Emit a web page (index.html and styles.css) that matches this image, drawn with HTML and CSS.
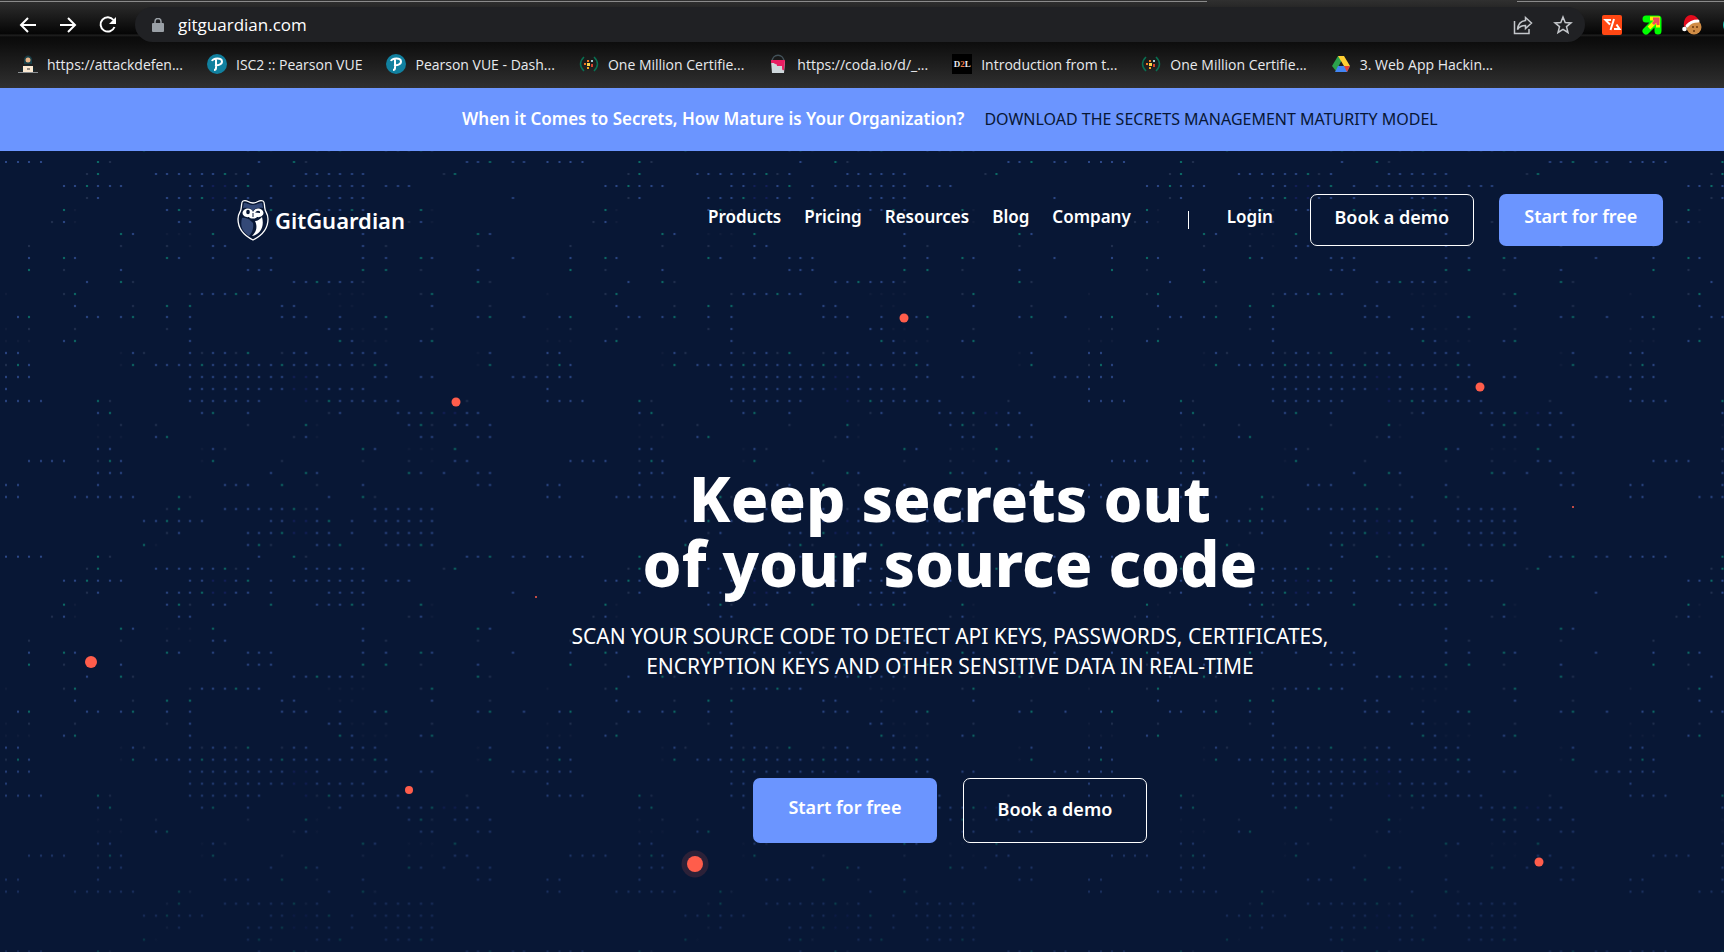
FILE: index.html
```html
<!DOCTYPE html>
<html lang="en">
<head>
<meta charset="utf-8">
<title>GitGuardian</title>
<link rel="stylesheet" href="styles.css">
</head>
<body>
<header class="browser">
  <div class="tab-edge"><span class="edge edge-left"></span><span class="edge edge-right"></span></div>
  <div class="toolbar">
    <div class="nav-buttons">
      <button type="button" class="icon-button" aria-label="Back"><svg width="20" height="20" viewBox="0 0 20 20"><path d="M18 10H3M10 3L3 10l7 7"/></svg></button>
      <button type="button" class="icon-button" aria-label="Forward"><svg width="20" height="20" viewBox="0 0 20 20"><path d="M2 10h15M10 3l7 7-7 7"/></svg></button>
      <button type="button" class="icon-button" aria-label="Reload"><svg width="20" height="20" viewBox="0 0 20 20"><path d="M15.500 5A7.200 7.200 0 1 0 16.500 12"/><path d="M18 2v7h-7z" fill="#fff" stroke="none"/></svg></button>
    </div>
    <form class="address">
      <svg class="lock" width="12" height="14" viewBox="0 0 12 14"><rect x="0" y="5" width="12" height="9" rx="1" fill="#9aa0a6"/><path d="M3 6V3.500a3 3 0 0 1 6 0V6" fill="none" stroke="#9aa0a6" stroke-width="1.500"/></svg>
      <input class="url" type="text" aria-label="Address" value="gitguardian.com">
      <button type="button" class="icon-button muted" aria-label="Share"><svg width="20" height="20" viewBox="0 0 20 20"><path d="M1.500 6v12.500h14.500V14"/><path d="M12.500 2.500l6 5.500-6 5.500V10.500C8.500 10.500 6 12 4.500 14.500 5 9.500 8 6 12.500 5.500z"/></svg></button>
      <button type="button" class="icon-button muted" aria-label="Bookmark"><svg width="20" height="20" viewBox="0 0 20 20"><path d="M10 2l2.200 5.500 5.800.4-4.500 3.700 1.500 5.900-5-3.200-5 3.200 1.500-5.900L2 7.900l5.800-.4z"/></svg></button>
    </form>
    <div class="extensions">
      <button type="button" class="icon-button" aria-label="Code extension"><svg width="20" height="20" viewBox="0 0 20 20"><rect width="20" height="20" rx="2" fill="#ff4713" stroke="none"/><path d="M9 5H3.500L8 9.500M12 4L8.500 15M14.500 9.500L17.500 14H12"/></svg></button>
      <button type="button" class="icon-button" aria-label="Arrow extension"><svg width="20" height="20" viewBox="0 0 20 20"><path d="M4 4h12v12M15 5L4 16" stroke="#0f0" stroke-width="7" stroke-linejoin="round" stroke-linecap="round"/><path d="M8 3.500h8v9M15 5L7 13" stroke="#fff200" stroke-width="4"/><path d="M11 4h5v6M15 5L11 9" stroke="#f0485d" stroke-width="3"/></svg></button>
      <button type="button" class="icon-button" aria-label="Cookie extension"><svg width="20" height="20" viewBox="0 0 20 20"><circle cx="12" cy="12" r="7.500" fill="#d08c45" stroke="none"/><circle cx="11" cy="12" r="1" fill="#68370f" stroke="none"/><circle cx="15" cy="12" r="1" fill="#68370f" stroke="none"/><circle cx="12" cy="16" r="1" fill="#68370f" stroke="none"/><path d="M2 12C1 4 5 0 9 0c4 0 7 3 8 6-5 0-8 2-11 5z" fill="#e30b1c" stroke="none"/><path d="M5 11c3-4 7-5 11-5" stroke="#fff" stroke-width="3" stroke-linecap="round"/><circle cx="2.500" cy="14" r="2.300" fill="#fff" stroke="none"/></svg></button>
      <button type="button" class="icon-button" aria-label="More extensions"><svg width="20" height="20" viewBox="0 0 20 20"><circle cx="10" cy="10" r="9" fill="#19b5a5" stroke="none"/></svg></button>
    </div>
  </div>
  <nav class="bookmarks" aria-label="Bookmarks">
    <a class="bookmark" href="#"><svg width="20" height="20" viewBox="0 0 20 20"><path d="M6 6c0-6 8-6 8 0v4H6z" fill="#183f48"/><circle cx="10" cy="6" r="2.500" fill="#e7b489"/><path d="M3 17c0-8 14-8 14 0z" fill="#152b31"/><rect x="5" y="12" width="10" height="6" fill="#fbe9d2"/><path d="M0 18h20v1H0z" fill="#8a8f92"/><path d="M9 15h3" stroke="#333"/></svg><span>https://attackdefen...</span></a>
    <a class="bookmark" href="#"><svg width="20" height="20" viewBox="0 0 20 20"><circle cx="10" cy="10" r="10" fill="#11809f"/><path d="M5 7c1-3 10-4 10 .5 0 3-4 4-7 3.500M9 5v9c0 2-1 2-2 2" fill="none" stroke="#fff" stroke-width="2"/></svg><span>ISC2 :: Pearson VUE</span></a>
    <a class="bookmark" href="#"><svg width="20" height="20" viewBox="0 0 20 20"><circle cx="10" cy="10" r="10" fill="#11809f"/><path d="M5 7c1-3 10-4 10 .5 0 3-4 4-7 3.500M9 5v9c0 2-1 2-2 2" fill="none" stroke="#fff" stroke-width="2"/></svg><span>Pearson VUE - Dash...</span></a>
    <a class="bookmark" href="#"><svg width="20" height="20" viewBox="0 0 20 20"><path d="M5 3Q-2 10 5 17M15 3Q22 10 15 17" fill="none" stroke="#087052" stroke-width="1.500"/><path d="M8 6h2v2H8zM5 9h2v2H5z" fill="#ef7b22"/><path d="M12 6h2v2h-2z" fill="#a8ced5"/><path d="M8 9h3v3H8z" fill="#f8d54c"/><path d="M8 13h2v2H8z" fill="#f3a51f"/><path d="M12 10h2v3h-2z" fill="#d6452b"/></svg><span>One Million Certifie...</span></a>
    <a class="bookmark" href="#"><svg width="20" height="20" viewBox="0 0 20 20"><path d="M4 8C4-1 16-1 16 8" fill="none" stroke="#43525a" stroke-width="1.500"/><path d="M3 7h14l-1 12H4z" fill="#cfd8dc"/><path d="M3 6h14l-1 10c-2 1-2-1-2-4H9c0-3-2-1-3-3H3z" fill="#e91e63"/></svg><span>https://coda.io/d/_...</span></a>
    <a class="bookmark" href="#"><span class="d2l">D<i>2</i>L</span><span>Introduction from t...</span></a>
    <a class="bookmark" href="#"><svg width="20" height="20" viewBox="0 0 20 20"><path d="M5 3Q-2 10 5 17M15 3Q22 10 15 17" fill="none" stroke="#087052" stroke-width="1.500"/><path d="M8 6h2v2H8zM5 9h2v2H5z" fill="#ef7b22"/><path d="M12 6h2v2h-2z" fill="#a8ced5"/><path d="M8 9h3v3H8z" fill="#f8d54c"/><path d="M8 13h2v2H8z" fill="#f3a51f"/><path d="M12 10h2v3h-2z" fill="#d6452b"/></svg><span>One Million Certifie...</span></a>
    <a class="bookmark" href="#"><svg width="20" height="20" viewBox="0 0 20 20"><path d="M7 2h6L5 17l-4-5z" fill="#2ba24c"/><path d="M7 2h6l6 10h-6z" fill="#ffcf32"/><path d="M7 12h12l-3 6H4z" fill="#4285f4"/><path d="M13 12h6l-3 6z" fill="#e34234"/></svg><span>3. Web App Hackin...</span></a>
  </nav>
</header>
<div class="viewport">
<div class="site">
  <aside class="banner">
    <strong>When it Comes to Secrets, How Mature is Your Organization?</strong>
    <a href="#">DOWNLOAD THE SECRETS MANAGEMENT MATURITY MODEL</a>
  </aside>
  <main class="hero">
    <svg class="backdrop" aria-hidden="true">
      <defs>
        <pattern id="grid" x="5" y="10" width="541.500" height="394.700" patternUnits="userSpaceOnUse"></pattern>
        <linearGradient id="fade" x1="0" y1="0" x2="0" y2="1"><stop offset="0.700" stop-color="#081735" stop-opacity="0"/><stop offset="1" stop-color="#081735" stop-opacity="0.600"/></linearGradient>
      </defs>
      <rect width="100%" height="100%" fill="url(#grid)"/>
      <rect width="100%" height="100%" fill="url(#fade)"/>
      <g fill="#ff5d4b">
        <circle cx="904" cy="167" r="4.500"/><circle cx="456" cy="251" r="4.500"/><circle cx="1480" cy="236" r="4.500"/>
        <circle cx="91" cy="511" r="6"/><circle cx="409" cy="639" r="4"/><circle cx="1539" cy="711" r="4.500"/>
        <circle cx="1573" cy="356" r="1"/><circle cx="536" cy="446" r="1"/>
        <circle cx="695" cy="713" r="13.500" opacity="0.150"/><circle cx="695" cy="713" r="8"/>
      </g>
    </svg>
    <nav class="menu" aria-label="Main">
      <a class="brand" href="#">
        <svg width="32" height="42" viewBox="0 0 32 42"><path d="M6 2C10 0 11 4 16 4s6-4 10-2c2 1 1 4 2 8 0 3 3 4 3 10 0 11-7 17-15 21C8 37 1 31 1 20c0-6 3-7 3-10C5 6 4 3 6 2z" fill="#081735" stroke="#fff" stroke-width="1.300"/><path d="M7 4c4 0 5 2 9 2s5-2 9-2l1 5c-5-1-8 0-10 3-2-3-5-4-10-3z" fill="#344977"/><path d="M7 11c4-3 8-1 9 2 1-3 5-5 9-2 4 4-1 8-5 7-1 2-7 2-8 0-4 1-9-3-5-7z" fill="#fff"/><ellipse cx="11" cy="13" rx="1.800" ry="2.300" fill="#081735"/><path d="M18 13.500q2.500-3 5-1v1.500z" fill="#081735"/><path d="M16 14v4" stroke="#081735"/><path d="M5 19c4-1 8 2 11 5 1 5-1 10-4 13C5 32 3 27 5 19z" fill="#344977"/><path d="M18 22c3 0 5-2 7-4 3 11-3 18-10 19 4-4 6-9 3-15z" fill="#fff"/></svg>
        <span>GitGuardian</span>
      </a>
      <div class="links"><a href="#">Products</a><a href="#">Pricing</a><a href="#">Resources</a><a href="#">Blog</a><a href="#">Company</a></div>
      <span class="divider"></span>
      <a class="login" href="#">Login</a>
      <button type="button" class="button outline">Book a demo</button>
      <button type="button" class="button solid">Start for free</button>
    </nav>
    <section class="pitch">
      <h1>Keep secrets out<br>of your source code</h1>
      <p>SCAN YOUR SOURCE CODE TO DETECT API KEYS, PASSWORDS, CERTIFICATES,<br>ENCRYPTION KEYS AND OTHER SENSITIVE DATA IN REAL-TIME</p>
      <div class="actions">
        <button type="button" class="button large solid">Start for free</button>
        <button type="button" class="button large outline">Book a demo</button>
      </div>
    </section>
  </main>
</div>
</div>
<script src="dots.js"></script>
</body>
</html>
```
FILE: styles.css
```css
* { box-sizing: border-box; }
body {
  margin: 0;
  height: 100vh;
  overflow: hidden;
  display: flex;
  flex-direction: column;
  background: #081735;
  color: #fff;
  font-family: "Noto Sans", "Open Sans", sans-serif;
}
a { color: inherit; text-decoration: none; }
button { font: inherit; color: inherit; border: 0; padding: 0; background: none; }
svg { flex: none; display: block; }

.browser { flex: none; height: 88px; background: linear-gradient(#303030 0, #050505 34px, #222 35px, #0b0b0b 37px, #0d0d0d 42px, #303030 88px); font-family: "Open Sans", sans-serif; overflow: hidden; }
.tab-edge { display: flex; justify-content: space-between; padding-top: 1px; height: 2px; }
.edge { height: 1px; background: #8a8a8a; }
.edge-left { width: 70%; }
.edge-right { width: 12%; }
.toolbar { display: flex; align-items: center; height: 45px; padding-left: 18px; }
.nav-buttons { display: flex; gap: 20px; width: 117px; }
.icon-button { flex: none; width: 20px; height: 20px; }
.icon-button svg { fill: none; stroke: #fff; stroke-width: 2; }
.muted svg { stroke: #c4c7cb; stroke-width: 1.5; }
.address { flex: 1; display: flex; align-items: center; gap: 20px; height: 35px; padding: 0 12px 0 17px; border-radius: 18px; background: #202124; }
.lock { margin-right: -6px; }
.url { flex: 1; min-width: 0; padding: 0; border: 0; outline: 0; background: none; color: #fff; font: 17px "Open Sans", sans-serif; }
.extensions { display: flex; gap: 20px; width: 139px; padding-left: 17px; }
.bookmarks { display: flex; gap: 24px; height: 36px; padding: 0 0 2px 18px; align-items: center; font-size: 14px; color: #e8eaed; }
.bookmark { display: flex; align-items: center; gap: 9px; white-space: nowrap; }
.d2l { width: 20px; height: 20px; background: #000; font: bold 9px/20px "Liberation Serif", serif; text-align: center; }
.d2l i { font-style: normal; color: #ef7b42; }

.viewport { flex: 1; min-height: 0; overflow: hidden; }
.site { width: 110.2vw; height: 100%; display: flex; flex-direction: column; }
.banner { flex: none; display: flex; justify-content: center; align-items: center; gap: 20px; height: 63px; padding-bottom: 2px; background: #6b95ff; font-size: 16px; }
.banner strong { font-size: 17px; font-weight: 600; }
.banner a { color: #081735; }
.hero { flex: 1; position: relative; min-height: 0; }
.backdrop { position: absolute; inset: 0; width: 100%; height: 100%; }
.menu { position: relative; display: flex; align-items: center; padding: 43px 237px 0 237px; font-size: 17px; font-weight: 600; }
.brand { display: flex; align-items: center; gap: 6px; margin-right: auto; font-size: 22px; }
.links { display: flex; gap: 23px; padding-bottom: 8px; }
.divider { width: 1px; height: 18px; margin: 0 38px 0 57px; background: #fff; }
.login { margin-right: 37px; padding-bottom: 8px; }
.button { height: 52px; width: 164px; border-radius: 7px; padding-bottom: 6px; font-size: 18px; font-weight: 600; }
.outline { border: 1px solid #fff; }
.solid { background: #6b95ff; padding-bottom: 8px; }
.menu .outline { margin-right: 25px; }
.pitch { position: relative; text-align: center; padding-top: 220px; }
h1 { margin: 0; font-size: 62px; line-height: 65px; font-weight: 800; }
.pitch p { margin: 25px 0 0; font-size: 21px; line-height: 30px; }
.actions { display: flex; justify-content: center; gap: 26px; margin-top: 97px; }
.large { width: 184px; height: 65px; }
.large.outline { padding-bottom: 3px; }
```
FILE: dots.js
```js
const rows = [
  "b0-3 g8 d9 b22 g25 d26 b40-41 g42 b44 b45",
  "d7 g8 b13-18 g19 d20 b21 b26-31 d38 g39",
  "b5-6 g7 b8-10 b16-17 n18-19 b20 g21 b23 b25-31 b33-35",
  "d7 b8 b14-16 g17 n18-19 b20-21 b23 b28-31 b44",
  "g5 f6 b14 g15 d16 b18-19 g23 b27-29 g30 b31 g36 f37",
  "d4 b5 f6 b15-16 d35 b36 f37",
  "g10 b11 f14-16 g18 b31 g41 b42",
  "d2 d10 d14 f16 b18-19 b31 d33 d41",
  "b2 g5 b6 g14 b15 b18 b21-23 b31 b33 g36 b37 b44",
  "g2 d5 b10 b21-23 g31 g33 d36 b41",
  "b7 g10 d11 b25-26 g27 b28-30 d31 g41 d42",
  "f0 d5 g6 d16 b17-19 g20 b21-22 f28-31 d36 g37",
  "b6 d11 g14 g16 b24-25 f29-30 b37 d42",
  "b1 g2 b7-8 b10 g11 b14 b16 b24-26 b29 b32 g33 b41 g42 b45",
  "f0 d2 d6 d14 b16 b28-29 f30-31 d33 d37",
  "f0-2 b5 g6 b16 g29 b30 f31-33 b36 g37",
  "b0-1 f10 b11 d12 b16 d17 b18-19 d20 g21 d24 b25-26 b30-32 f41 b42",
  "d0 g1 b2 f10 g11 b13-16 g17 b18-23 g24 b25-30 d31 g32 b33 f41 g42",
  "b0-2 b16-24 n25-26 b27 b32-33 b36-37 b44-46",
  "b0 b16-24 n25-26 b27-31",
  "b0-3 g8 d9 b16-22 n26 d27 g28 b29-34 d40",
  "b8 g9 b17 g18 b21 d28 b29 b34-36 g37 n38-39 b40-41",
  "f8 d10 d13 d21 g26 f27 b35 g36 d37 b39-40 b42",
  "f8-10 b13 g14 d25 b26 f27 b36-37 b41-42",
  "b8-9 f17 b18 d19 g31 b32 f35-37 g39",
  "b2-5 d8 g9 b10 f17 g18 d24 d31 d35 f37 b39-40",
  "b8-10 b23 g26 b27 g35 b36 b38 b41-42",
  "b0-1 b8 b19-21 g24 d27 b31 b41-42",
  "b0-1 b6-11 g15 d16 b28 g31 d32",
  "d14 g15 b19-24 g25 d26 b27 b32-37",
  "b12-13 g14 b15-17 b23-24 n25-26 b27 g28 b30 b32-37",
  "d14 b15 b21-23 g24 n25-26 b27-28 b30 b33-37",
  "g12 f13 b21 g22 d23 b27-28 g29 b33-35 g36 b37"
];
const colors = { b: "#2c4888", g: "#0b6f68", d: "#21304f", n: "#131f5b", f: "#111e3c" };
const pattern = document.getElementById("grid");
rows.forEach((row, r) => {
  row.split(" ").forEach((run) => {
    const [from, to = from] = run.slice(1).split("-").map(Number);
    for (let c = from; c <= to; c++) {
      const dot = document.createElementNS("http://www.w3.org/2000/svg", "rect");
      dot.setAttribute("x", Math.round(c * 11.52));
      dot.setAttribute("y", Math.round(r * 11.96));
      dot.setAttribute("width", 2);
      dot.setAttribute("height", 2);
      dot.setAttribute("fill", colors[run[0]]);
      pattern.append(dot);
    }
  });
});
```
